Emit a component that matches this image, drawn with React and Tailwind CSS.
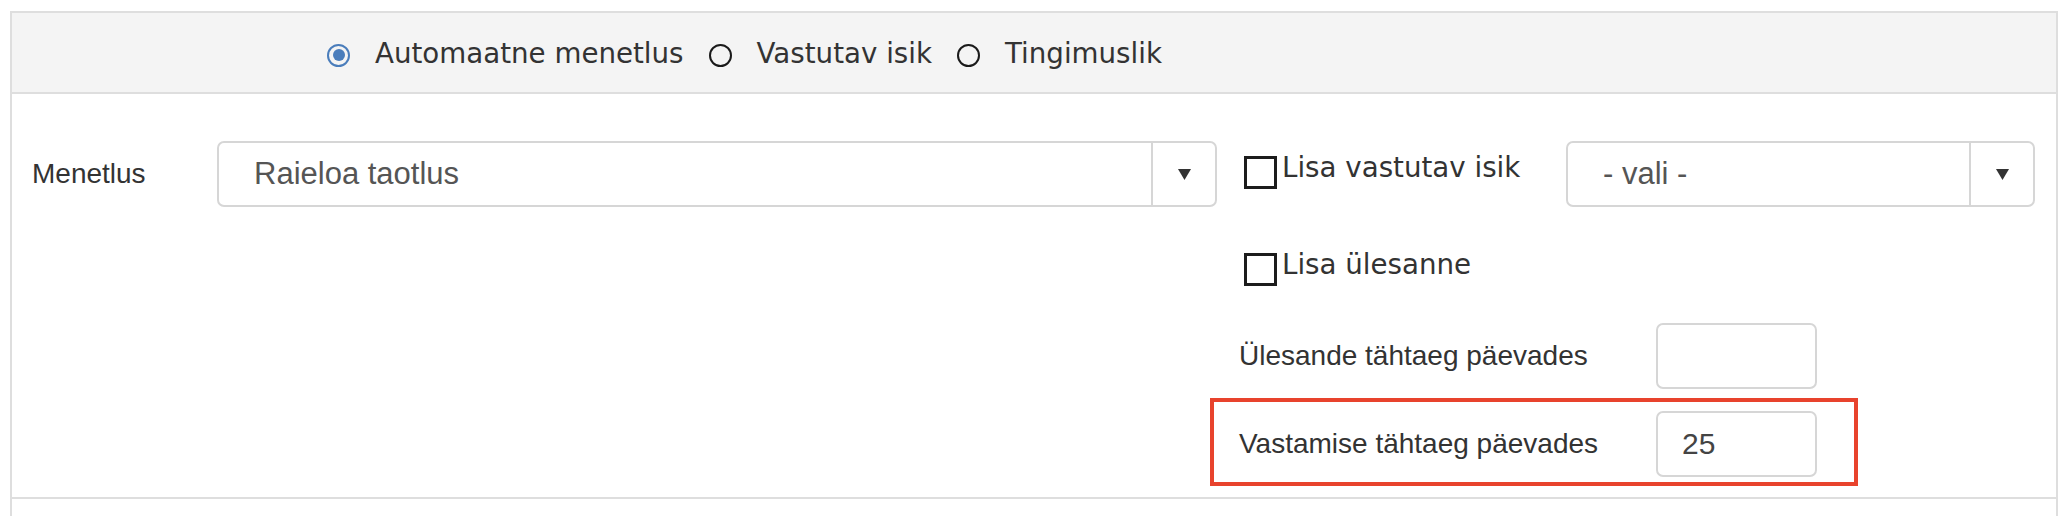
import { useState } from 'react'

const Radio = ({ checked }) =>
  checked ? (
    <span className="flex h-[23px] w-[23px] shrink-0 items-center justify-center rounded-full border-[2.5px] border-[#4a7dbb]">
      <span className="block h-[12px] w-[12px] rounded-full bg-[#4a7dbb]" />
    </span>
  ) : (
    <span className="block h-[23px] w-[23px] shrink-0 rounded-full border-2 border-[#1a1a1a]" />
  )

const Select = ({ value, className }) => (
  <div className={`flex h-[66px] items-stretch rounded-[7px] border-2 border-[#d6d6d6] bg-white ${className}`}>
    <div className="flex flex-1 items-center pl-[35px] font-['Liberation_Sans',Arial,sans-serif] text-[31px] text-[#555]">
      {value}
    </div>
    <div className="flex w-[64px] items-center justify-center border-l-2 border-[#d6d6d6]">
      <svg width="13" height="11" viewBox="0 0 13 11">
        <path d="M0 0h13L6.5 11z" fill="#333" />
      </svg>
    </div>
  </div>
)

const Check = ({ label, className = '' }) => (
  <label className={`flex items-start ${className}`}>
    <span className="block h-[33px] w-[33px] shrink-0 border-[3px] border-[#1c1c1c] bg-white" />
    <span className="ml-[5px] -mt-[2px] font-['DejaVu_Sans',sans-serif] text-[27.7px] leading-[28px] text-[#333]">
      {label}
    </span>
  </label>
)

const NumberInput = ({ value }) => (
  <input
    readOnly
    value={value}
    className="h-[66px] w-[161px] rounded-[7px] border-2 border-[#d6d6d6] bg-white pl-[24px] font-['Liberation_Sans',Arial,sans-serif] text-[30px] text-[#444] outline-none"
  />
)

const modes = ['Automaatne menetlus', 'Vastutav isik', 'Tingimuslik']

export default function App() {
  const [mode] = useState(0)

  return (
    <div className="min-h-[516px] bg-white pt-[11px]">
      <div className="ml-[10px] w-[2048px] border-x-2 border-t-2 border-[#dedede]">
        {/* mode radios */}
        <div className="flex h-[81px] items-center gap-[25px] border-b-2 border-[#dedede] bg-[#f4f4f4] pl-[315px] pt-[2px] font-['DejaVu_Sans',sans-serif] text-[27.7px] text-[#333]">
          {modes.map((m, i) => (
            <div key={m} className="flex items-center gap-[25px]">
              <span className="mt-[4px] flex">
                <Radio checked={i === mode} />
              </span>
              <span>{m}</span>
            </div>
          ))}
        </div>

        {/* body */}
        <div className="flex items-start pb-[11px] pl-[20px] pt-[47px]">
          <div className="flex items-center">
            <span className="w-[185px] font-['Liberation_Sans',Arial,sans-serif] text-[28px] text-[#333]">Menetlus</span>
            <Select value="Raieloa taotlus" className="w-[1000px]" />
          </div>

          <div className="-ml-[7px] flex flex-col">
            <div className="flex items-start">
              <div className="w-[356px] pl-[34px] pt-[15px]">
                <Check label="Lisa vastutav isik" />
              </div>
              <Select value="- vali -" className="w-[469px]" />
            </div>

            <Check label="Lisa ülesanne" className="mt-[46px] pl-[34px]" />

            <div className="mt-[37px] flex items-center pl-[29px]">
              <span className="w-[417px] font-['Liberation_Sans',Arial,sans-serif] text-[28px] text-[#333]">
                Ülesande tähtaeg päevades
              </span>
              <NumberInput value="" />
            </div>

            <div className="mt-[9px] flex w-[648px] items-center border-4 border-[#e8432d] pb-[5px] pl-[25px] pt-[9px]">
              <span className="w-[417px] font-['Liberation_Sans',Arial,sans-serif] text-[28px] text-[#333]">
                Vastamise tähtaeg päevades
              </span>
              <NumberInput value="25" />
            </div>
          </div>
        </div>

        <div className="h-[20px] border-t-2 border-[#dedede]" />
      </div>
    </div>
  )
}
